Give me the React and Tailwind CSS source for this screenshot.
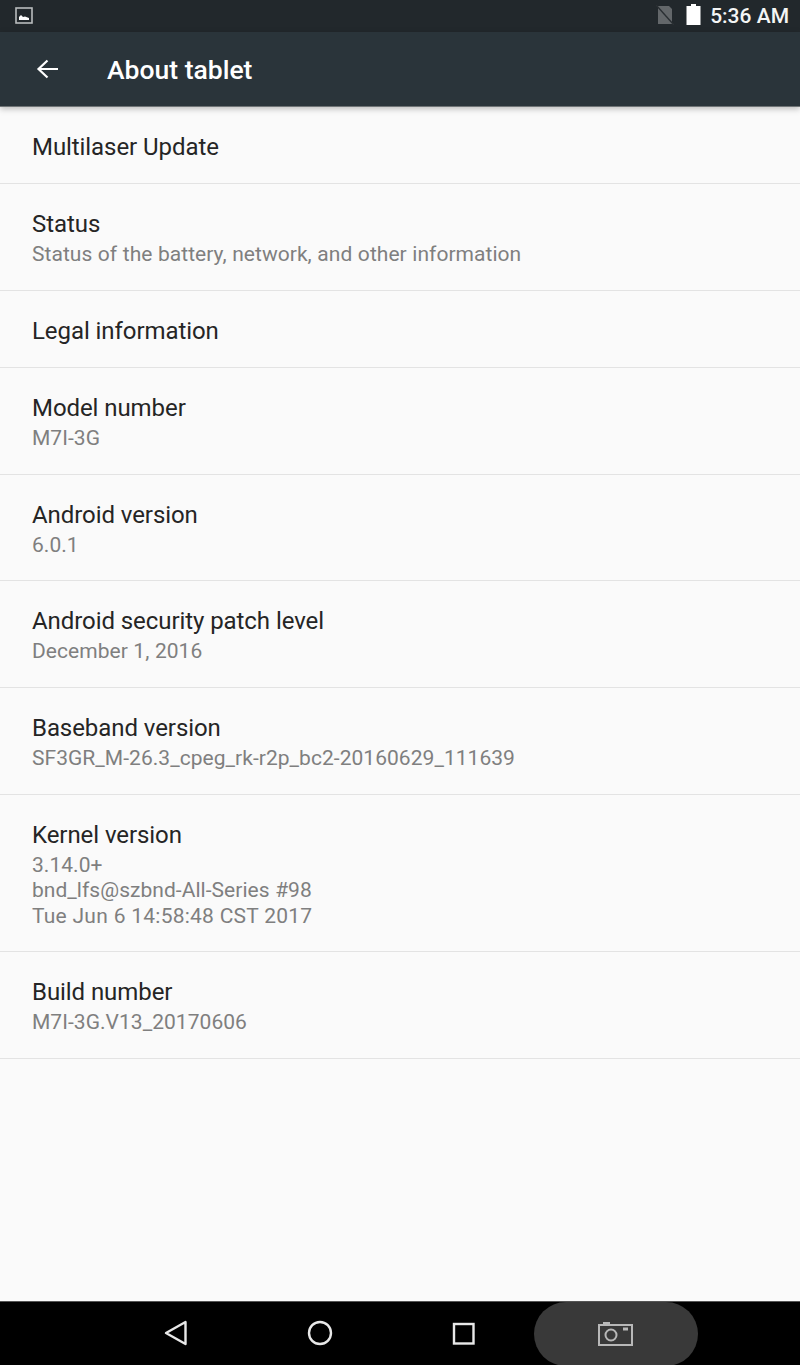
// App.jsx
import React from 'react';

const rows = [
  { title: 'Multilaser Update', height: 'h-[77px]' },
  { title: 'Status', lines: ['Status of the battery, network, and other information'], height: 'h-[107px]' },
  { title: 'Legal information', height: 'h-[77px]' },
  { title: 'Model number', lines: ['M7I-3G'], height: 'h-[107px]' },
  { title: 'Android version', lines: ['6.0.1'], height: 'h-[106px]' },
  { title: 'Android security patch level', lines: ['December 1, 2016'], height: 'h-[107px]' },
  { title: 'Baseband version', lines: ['SF3GR_M-26.3_cpeg_rk-r2p_bc2-20160629_111639'], height: 'h-[107px]' },
  { title: 'Kernel version', lines: ['3.14.0+', 'bnd_lfs@szbnd-All-Series #98', 'Tue Jun 6 14:58:48 CST 2017'], height: 'h-[157px]' },
  { title: 'Build number', lines: ['M7I-3G.V13_20170606'], height: 'h-[107px]' },
];

const StatusBar = () => (
  <div className="flex h-8 shrink-0 items-center justify-between bg-[#22282c] pl-[15px] pr-[11px]">
    <svg width="18" height="18" viewBox="0 0 18 18" fill="none">
      <rect x="1" y="1" width="16" height="15" stroke="#b9bcbe" strokeWidth="1.6" />
      <path d="M4 13 V10 L6 8 L8 10 L10 9.5 L14 11 V13 Z" fill="#ffffff" />
    </svg>
    <div className="flex items-center">
      <svg width="18" height="20" viewBox="0 0 18 20" className="mr-[12px] -translate-y-px">
        <path d="M2 1 H13 L16 4 V19 H2 Z" fill="#63676a" />
        <path d="M0 0 L18 20" stroke="#2a2f33" strokeWidth="1.5" />
      </svg>
      <svg width="15" height="21" viewBox="0 0 15 21" className="mr-[9px] -translate-y-[2px]">
        <path d="M5 0 H10 V2 H14.5 V21 H0.5 V2 H5 Z" fill="#ffffff" />
      </svg>
      <span className="text-[21px] font-medium leading-none text-[#f4f5f5]">5:36 AM</span>
    </div>
  </div>
);

const Toolbar = () => (
  <div className="relative z-10 flex h-[75px] shrink-0 items-center border-b border-[#6f7476] bg-[#2a343a] pl-[36px] shadow-[0_2px_6px_rgba(0,0,0,0.25)]">
    <svg width="24" height="24" viewBox="0 0 24 24" fill="none" stroke="#ffffff" strokeWidth="2.2">
      <path d="M22 12 H2.5 M11.5 3.5 L2.5 12 L11.5 20.5" />
    </svg>
    <span className="ml-[47px] pt-[3px] text-[26.5px] font-medium leading-none text-white">About tablet</span>
  </div>
);

const Row = ({ title, lines, height }) => (
  <div className={`flex ${height} shrink-0 flex-col justify-center border-b border-[#e3e3e3] pl-8 ${lines ? 'pt-[2px]' : 'pt-[3px]'}`}>
    <div className="text-[24px] leading-[32px] tracking-[-0.07px] text-[#252525]">{title}</div>
    {lines && (
      <div className="mt-[2px] text-[21px] leading-[25.5px] tracking-[0.04px] text-[#7f7f7f] [word-spacing:0.3px]">
        {lines.map(line => (
          <div key={line} className={line.startsWith('Tue') ? 'tracking-[0.2px]' : ''}>{line}</div>
        ))}
      </div>
    )}
  </div>
);

const NavBar = () => (
  <div className="relative flex h-16 shrink-0 items-center border-t border-[#555555] bg-black">
    <svg width="26" height="28" viewBox="0 0 26 28" fill="none" stroke="#e8e8e8" strokeWidth="2.4" strokeLinejoin="round" className="absolute left-[163px] top-[17px]">
      <path d="M22.5 3 V25 L3 14 Z" />
    </svg>
    <svg width="26" height="26" viewBox="0 0 26 26" fill="none" stroke="#e8e8e8" strokeWidth="2.4" className="absolute left-[307px] top-[18px]">
      <circle cx="13" cy="13" r="11" />
    </svg>
    <svg width="24" height="24" viewBox="0 0 24 24" fill="none" stroke="#e8e8e8" strokeWidth="2.4" className="absolute left-[452px] top-[20px]">
      <rect x="2" y="2" width="19.5" height="19.5" />
    </svg>
    <div className="absolute left-[534px] top-0 flex h-[64px] w-[164px] items-center justify-center rounded-full bg-[#393939]">
      <svg width="36" height="26" viewBox="0 0 36 26" fill="none" stroke="#b8b8b8" strokeWidth="2">
        <path d="M1 4 H34 V24 H1 Z" />
        <path d="M6 3 V2 H11 V3" />
        <circle cx="13" cy="14" r="5.5" />
        <path d="M25 8 H30" strokeWidth="3" />
      </svg>
    </div>
  </div>
);

export default function App() {
  return (
    <div className="flex h-[1365px] w-[800px] flex-col overflow-hidden bg-[#fafafa] font-['Roboto',sans-serif]">
      <StatusBar />
      <Toolbar />
      <div className="flex-1">
        {rows.map(row => <Row key={row.title} {...row} />)}
      </div>
      <NavBar />
    </div>
  );
}
